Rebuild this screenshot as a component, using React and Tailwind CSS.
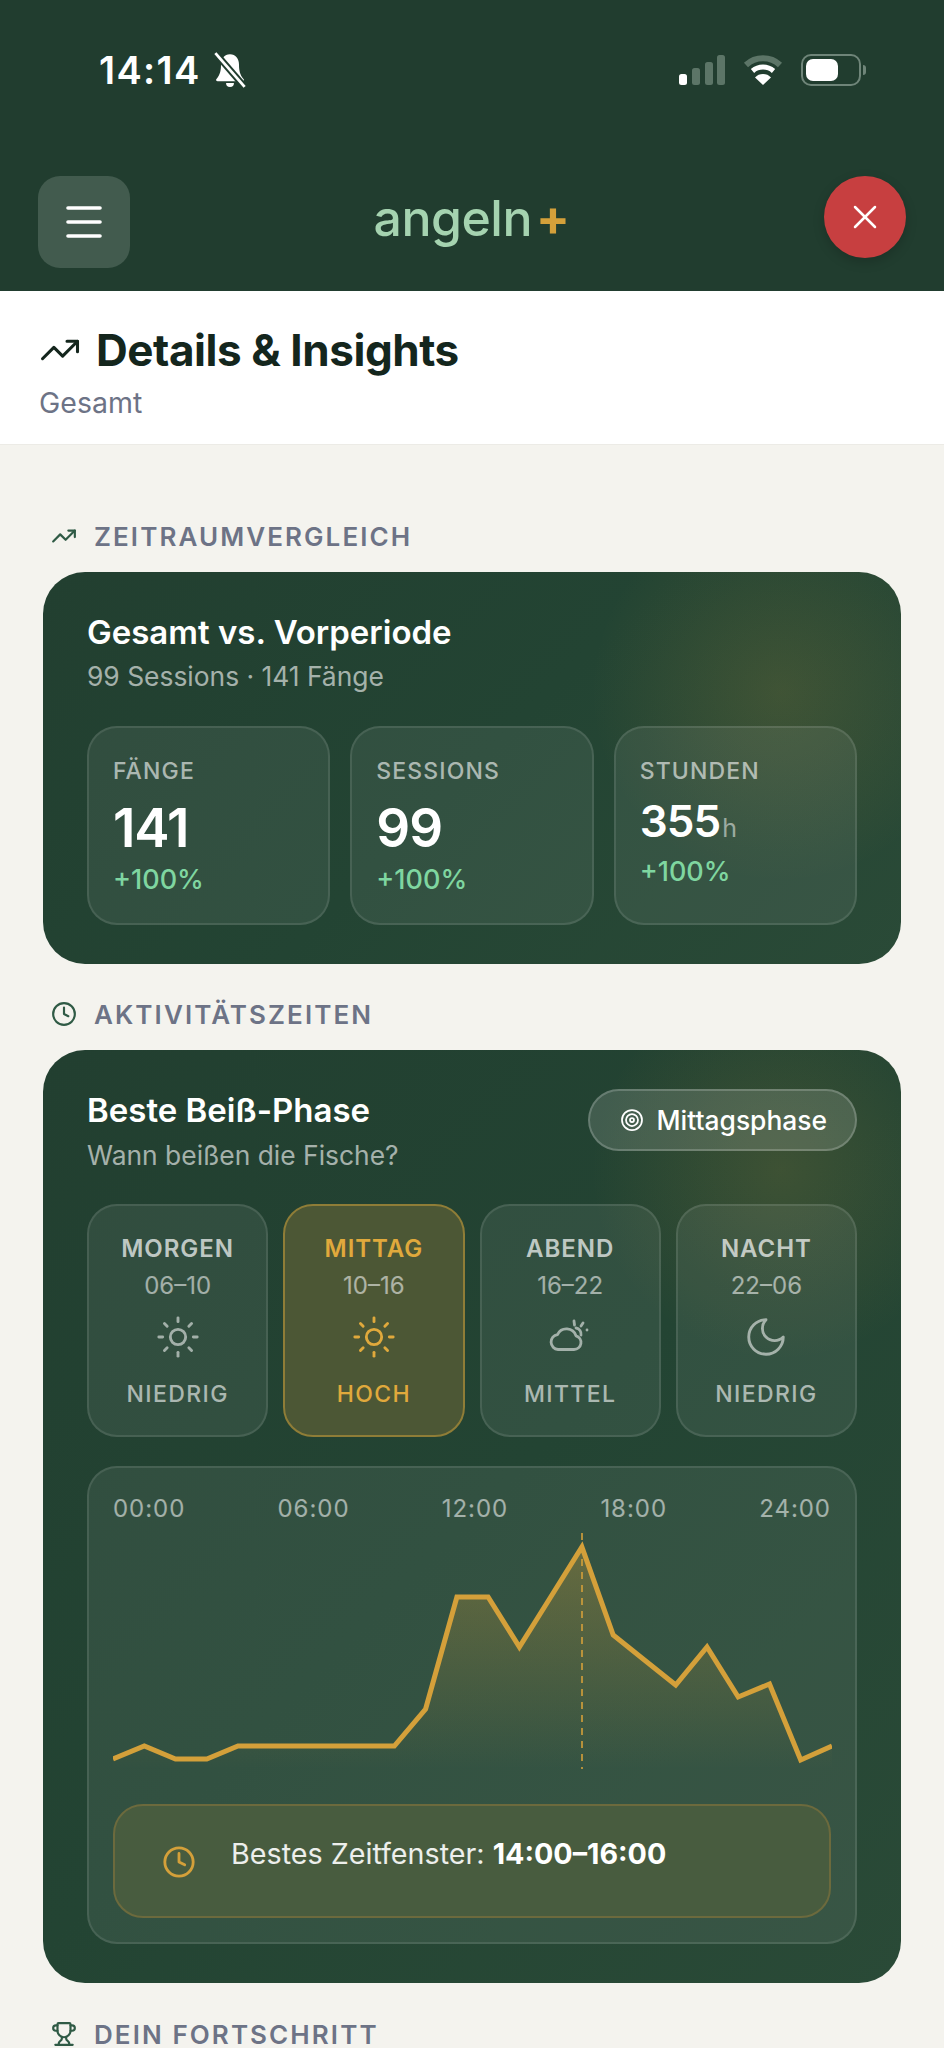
import { Clock, Menu, Sun, Target, TrendingUp, Trophy, X } from "lucide-react";

const CloudSunIcon = ({ className }) => (
  <svg width="46" height="46" viewBox="-3 0 46 46" fill="none" stroke="currentColor" strokeWidth="2.800" strokeLinecap="round" strokeLinejoin="round" className={className}>
    <path d="M8 35.500H24a7 7 0 0 0 2-13.700A10 10 0 0 0 7.500 20.600A7.500 7.500 0 0 0 8 35.500Z" />
    <path d="M24 7l.5 4M33 9l-2 3M37 16h.01M26 14a6 6 0 0 1 5 7" />
  </svg>
);

const MoonIcon = ({ className }) => (
  <svg width="46" height="46" viewBox="0 0 24 24" fill="none" stroke="currentColor" strokeWidth="1.500" strokeLinecap="round" strokeLinejoin="round" className={className}>
    <path d="M12 3a6 6 0 0 0 9 9 9 9 0 1 1-9-9Z" />
  </svg>
);

const SunIcon = ({ className }) => <Sun size={46} strokeWidth={1.5} className={className} />;

const STATS = [
  { label: "FÄNGE", value: "141", delta: "+100%" },
  { label: "SESSIONS", value: "99", delta: "+100%" },
  { label: "STUNDEN", value: "355", unit: "h", delta: "+100%" },
];

const PHASES = [
  { name: "MORGEN", range: "06–10", Icon: SunIcon, level: "NIEDRIG" },
  { name: "MITTAG", range: "10–16", Icon: SunIcon, level: "HOCH", active: true },
  { name: "ABEND", range: "16–22", Icon: CloudSunIcon, level: "MITTEL" },
  { name: "NACHT", range: "22–06", Icon: MoonIcon, level: "NIEDRIG" },
];

const HOURS = ["00:00", "06:00", "12:00", "18:00", "24:00"];

// one y value per hour, measured from the top of the chart
const CURVE = [226, 213, 226, 226, 213, 213, 213, 213, 213, 213, 176, 64, 64, 114, 64, 14, 102, 127, 152, 114, 164, 151, 227, 213];
const STEP = 719 / 23;
const LINE = CURVE.map((y, i) => `${i === 0 ? "M" : "L"}${(i * STEP).toFixed(1)} ${y}`).join(" ");

const CARD_BG =
  "bg-[radial-gradient(circle_at_86%_120px,rgba(212,160,58,0.15)_0px,rgba(212,160,58,0)_190px),linear-gradient(135deg,#223f30_0%,#234433_50%,#2a4a37_100%)]";

function StatusBar() {
  return (
    <div className="flex h-[36px] items-center justify-between pl-[61px] pr-[40px]">
      <div className="flex items-center gap-[11px]">
        <span className="text-[38px] leading-none font-semibold tracking-[0.035em] text-white">14:14</span>
        <svg width="36" height="36" viewBox="0 0 32 32">
          <path d="M16 2c-5 0-8 4-8 9 0 6-1 9-4 13-1 1 0 2 1 2h22c1 0 2-1 1-2-3-4-4-7-4-13 0-5-3-9-8-9z" fill="#fff" />
          <path d="M12.500 27.500a3.500 3.500 0 0 0 7 0z" fill="#fff" />
          <path d="M3 1l26 30" stroke="#213d2f" strokeWidth="6" />
          <path d="M3 1l26 30" stroke="#fff" strokeWidth="2.500" />
        </svg>
      </div>
      <div className="flex items-center gap-[18px]">
        <svg width="46" height="30" viewBox="0 0 46 30">
          <rect x="0" y="19" width="8" height="11" rx="2.500" fill="#fff" />
          <rect x="13" y="13" width="8" height="17" rx="2.500" fill="#5c7567" />
          <rect x="26" y="7" width="8" height="23" rx="2.500" fill="#5c7567" />
          <rect x="38" y="0" width="8" height="30" rx="2.500" fill="#5c7567" />
        </svg>
        <svg width="40" height="30" viewBox="0 0 40 30">
          <path d="M3 10a25 25 0 0 1 34 0" fill="none" stroke="#5c7567" strokeWidth="6" />
          <path d="M9.500 16a16 16 0 0 1 21 0" fill="none" stroke="#fff" strokeWidth="5" />
          <path d="M20 30l-8-7.500a11 11 0 0 1 16 0z" fill="#fff" />
        </svg>
        <div className="flex items-center gap-[2px]">
          <div className="flex h-[32px] w-[60px] items-center rounded-[10px] border-2 border-[#6f8579] p-[3px]">
            <div className="h-full w-[32px] rounded-[7px] bg-white" />
          </div>
          <div className="h-[10px] w-[3px] rounded-r-full bg-[#6f8579]" />
        </div>
      </div>
    </div>
  );
}

function SectionLabel({ Icon, children }) {
  return (
    <div className="flex h-[30px] items-center gap-[17px] pl-[8px]">
      <Icon size={26} strokeWidth={2} className="shrink-0 text-[#2f5a45]" />
      <span className="mt-[1px] text-[26px] leading-none font-semibold tracking-[0.08em] text-[#6d7386]">{children}</span>
    </div>
  );
}

function StatCard({ label, value, unit, delta }) {
  return (
    <div className="h-[199px] rounded-[30px] border-2 border-white/10 bg-white/[0.07] px-[24px] pt-[29px]">
      <p className="text-[23px] leading-[28px] font-medium tracking-[0.05em] text-white/60">{label}</p>
      {unit ? (
        <>
          <p className="mt-[13px] text-[44px] leading-[46px] font-semibold tracking-[-0.02em] text-white">
            {value}
            <span className="ml-[2px] text-[25px] font-normal text-white/50">{unit}</span>
          </p>
          <p className="mt-[5px] text-[27px] leading-[32px] font-medium text-[#7fd6a0]">{delta}</p>
        </>
      ) : (
        <>
          <p className="mt-[14px] text-[53px] leading-[58px] font-semibold tracking-[-0.02em] text-white">{value}</p>
          <p className="mt-[7px] text-[27px] leading-[32px] font-medium text-[#7fd6a0]">{delta}</p>
        </>
      )}
    </div>
  );
}

function PhaseCard({ name, range, Icon, level, active }) {
  return (
    <div
      className={`flex h-[233px] flex-col items-center rounded-[30px] border-2 pt-[28px] ${
        active ? "border-[#8f7d37] bg-[#4c5735]" : "border-white/10 bg-white/[0.07]"
      }`}
    >
      <p className={`text-[24px] leading-[30px] font-semibold tracking-[0.04em] ${active ? "text-[#e0a93c]" : "text-white/70"}`}>{name}</p>
      <p className="mt-[7px] text-[24px] leading-[30px] text-white/55">{range}</p>
      <Icon className={`mt-[13px] ${active ? "text-[#e0a93c]" : "text-white/55"}`} />
      <p className={`mt-[19px] text-[23px] leading-[30px] font-medium tracking-[0.06em] ${active ? "text-[#e0a93c]" : "text-white/60"}`}>{level}</p>
    </div>
  );
}

export default function App() {
  return (
    <div className="h-[2048px] w-[944px] overflow-hidden bg-[#f4f3ee] font-[family-name:Inter,sans-serif]">
      {/* HEADER */}
      <header className="h-[291px] bg-[#213d2f] px-[38px] pt-[52px]">
        <StatusBar />
        <div className="mt-[88px] flex items-start justify-between">
          <button className="flex h-[92px] w-[92px] items-center justify-center rounded-[22px] bg-[#425b4e] text-white">
            <Menu size={48} strokeWidth={1.8} />
          </button>
          <div className="mr-[11px] mt-[12px] flex items-center text-[50px] leading-[60px] font-medium tracking-[-0.01em] text-[#a5d3b0]">
            angeln<span className="ml-[4px] font-bold text-[#d4a03a]">+</span>
          </div>
          <button className="flex h-[82px] w-[82px] items-center justify-center rounded-full bg-[#c73f40] text-white shadow-[0_4px_12px_rgba(0,0,0,0.18)]">
            <X size={40} strokeWidth={1.5} />
          </button>
        </div>
      </header>

      {/* TITLE */}
      <section className="h-[154px] border-b border-[#ecebe6] bg-white pl-[39px] pt-[32px]">
        <div className="flex items-center gap-[15px]">
          <TrendingUp size={42} strokeWidth={1.75} className="text-[#14261d]" />
          <h1 className="text-[44px] leading-[54px] font-bold tracking-[-0.01em] text-[#14261d]">Details &amp; Insights</h1>
        </div>
        <p className="mt-[9px] text-[28.500px] leading-[34px] text-[#6d7386]">Gesamt</p>
      </section>

      <main className="px-[43px] pt-[76px]">
        <SectionLabel Icon={TrendingUp}>ZEITRAUMVERGLEICH</SectionLabel>

        {/* ZEITRAUM */}
        <section className={`mt-[21px] h-[392px] rounded-[42px] px-[44px] pt-[41px] ${CARD_BG}`}>
          <h2 className="text-[33px] leading-[38px] font-semibold text-white">Gesamt vs. Vorperiode</h2>
          <p className="mt-[9px] text-[26.400px] leading-[32px] text-white/60">99 Sessions · 141 Fänge</p>
          <div className="mt-[34px] grid grid-cols-3 gap-[20px]">
            {STATS.map((s) => (
              <StatCard key={s.label} {...s} />
            ))}
          </div>
        </section>

        <div className="mt-[35px]">
          <SectionLabel Icon={Clock}>AKTIVITÄTSZEITEN</SectionLabel>
        </div>

        {/* BEISS-PHASE */}
        <section className={`mt-[21px] h-[933px] rounded-[42px] px-[44px] pt-[39px] ${CARD_BG}`}>
          <div className="flex items-start justify-between">
            <div>
              <h2 className="text-[33px] leading-[42px] font-semibold text-white">Beste Beiß-Phase</h2>
              <p className="mt-[7px] text-[26.400px] leading-[34px] text-white/60">Wann beißen die Fische?</p>
            </div>
            <div className="flex h-[62px] items-center gap-[12px] rounded-full border-2 border-white/20 bg-white/[0.14] pl-[30px] pr-[28px] text-white">
              <Target size={24} strokeWidth={1.75} />
              <span className="text-[26.400px] leading-none font-medium">Mittagsphase</span>
            </div>
          </div>

          <div className="mt-[32px] grid grid-cols-4 gap-[15px]">
            {PHASES.map((p) => (
              <PhaseCard key={p.name} {...p} />
            ))}
          </div>

          {/* CHART */}
          <div className="mt-[29px] h-[478px] rounded-[30px] border-2 border-white/10 bg-white/[0.07] px-[24px] pt-[26px]">
            <div className="flex justify-between text-[24px] leading-[30px] tracking-[0.04em] text-white/55">
              {HOURS.map((h) => (
                <span key={h}>{h}</span>
              ))}
            </div>
            <svg className="mt-[9px] block" width="719" height="236" viewBox="0 0 719 236">
              <defs>
                <linearGradient id="fill" x1="0" y1="0" x2="0" y2="1">
                  <stop offset="0" stopColor="#d4a03a" stopOpacity="0.32" />
                  <stop offset="1" stopColor="#d4a03a" stopOpacity="0" />
                </linearGradient>
              </defs>
              <path d={`${LINE} L719 236 L0 236 Z`} fill="url(#fill)" />
              <path d="M469 0V236" stroke="#d4a03a" strokeWidth="2" strokeDasharray="7 6" opacity="0.8" />
              <path d={LINE} fill="none" stroke="#d4a03a" strokeWidth="5" strokeLinejoin="miter" />
            </svg>
            <div className="mt-[35px] flex h-[114px] rounded-[30px] border-2 border-[#6c6a3d] bg-[#485c3f] pl-[47px] pt-[31px]">
              <Clock size={34} strokeWidth={2} className="mt-[8px] text-[#d4a03a]" />
              <p className="ml-[35px] text-[28.700px] leading-[34px] text-white/90">
                Bestes Zeitfenster: <strong className="font-bold text-white">14:00–16:00</strong>
              </p>
            </div>
          </div>
        </section>

        <div className="mt-[36px]">
          <SectionLabel Icon={Trophy}>DEIN FORTSCHRITT</SectionLabel>
        </div>
      </main>
    </div>
  );
}
